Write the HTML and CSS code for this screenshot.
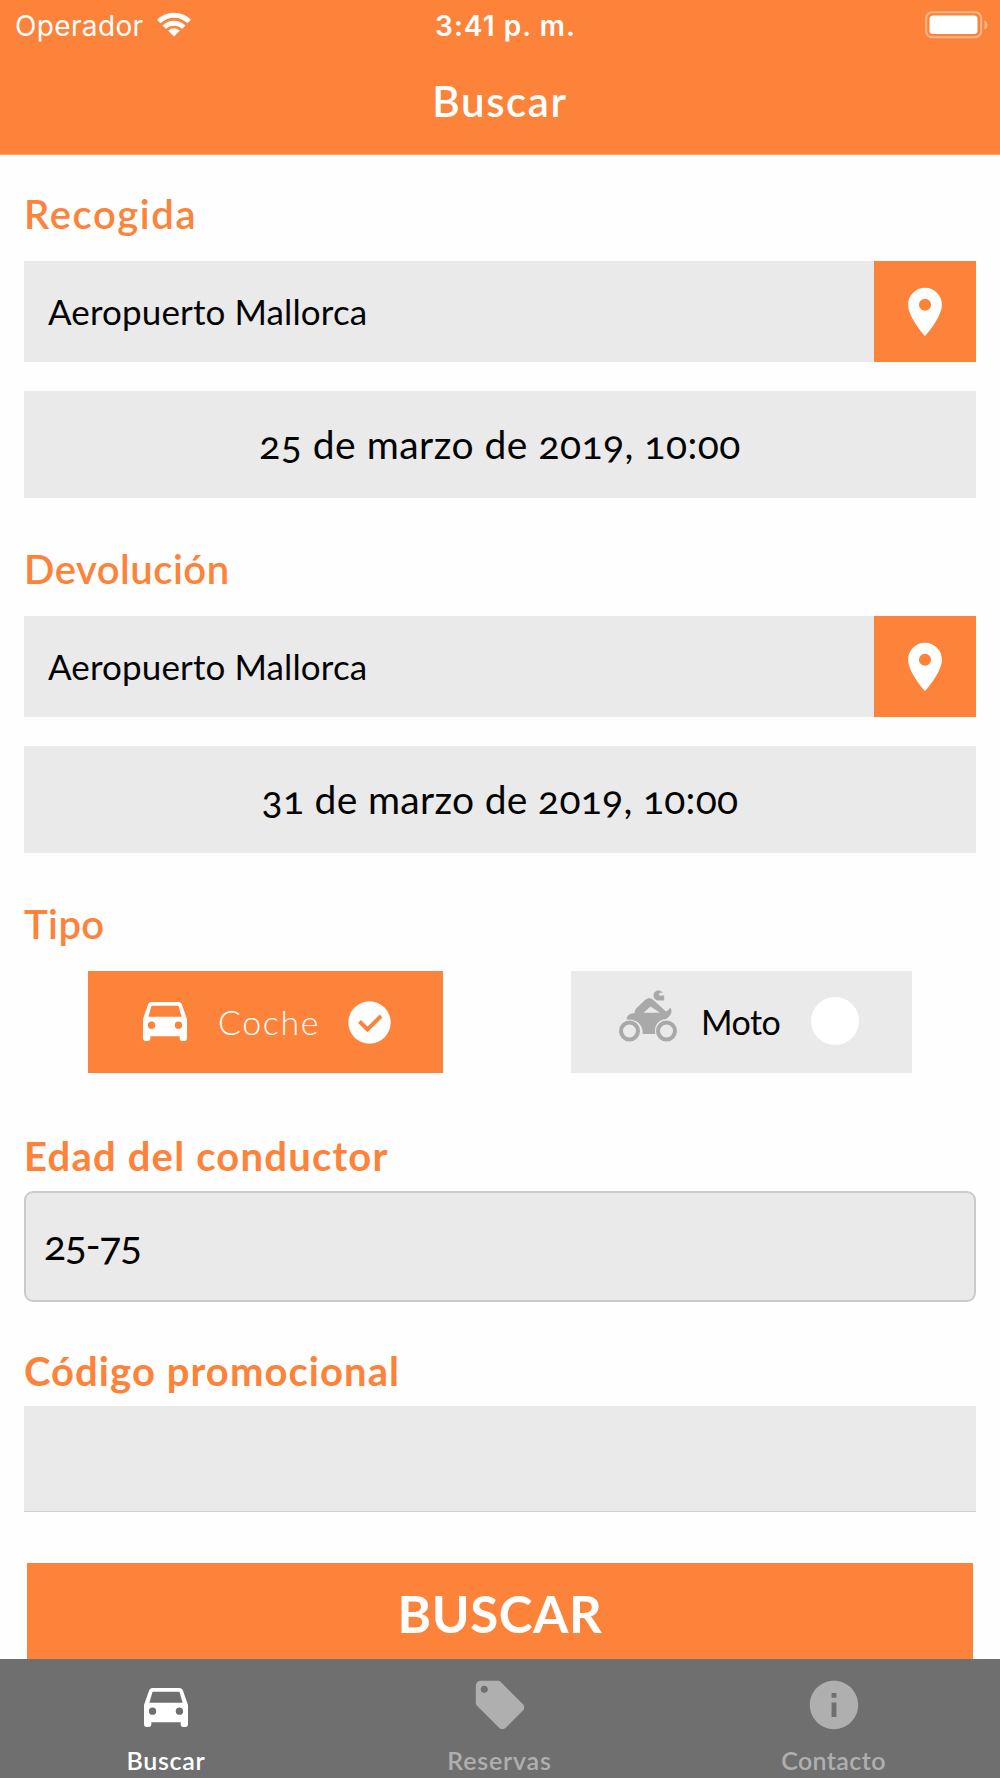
FILE: index.html
```html
<!DOCTYPE html>
<html lang="es">
<head>
<meta charset="utf-8">
<title>Buscar</title>
<link rel="stylesheet" href="styles.css">
</head>
<body>
<header class="header">
  <div class="status">
    <div class="carrier"><span class="carrier-name">Operador</span>
      <svg class="wifi" width="34" height="25" viewBox="0 0 34 25" fill="none" stroke="#fff" stroke-width="5"><path d="M1.8 9.5a21.5 21.5 0 0 1 30.4 0M7.3 15.2a13.7 13.7 0 0 1 19.4 0"/><path d="M11.2 18.7a8.2 8.2 0 0 1 11.6 0L17 24.5z" fill="#fff" stroke="none"/></svg>
    </div>
    <div class="clock"><span class="clock-text">3:41 p. m.</span></div>
    <svg class="battery" width="64" height="28" viewBox="0 0 64 28"><rect x="1.2" y="1.2" width="55" height="25" rx="6" fill="none" stroke="#fff" stroke-opacity=".42" stroke-width="2"/><rect x="4.5" y="4.5" width="48" height="18.500" rx="3.500" fill="#fff"/><path d="M59.500 9.500q3 1.500 3 4.500t-3 4.500z" fill="#fff" fill-opacity=".45"/></svg>
  </div>
  <h1 class="title"><span class="title-text">Buscar</span></h1>
</header>
<main class="form">
  <section class="group">
    <h2 class="label"><span class="t-recogida">Recogida</span></h2>
    <div class="place"><div class="place-name"><span class="t-place">Aeropuerto Mallorca</span></div><div class="pin"><svg width="58" height="58" viewBox="0 0 24 24" fill="#fff"><path d="M12 2C8.130 2 5 5.130 5 9c0 5.250 7 13 7 13s7-7.750 7-13c0-3.870-3.130-7-7-7zm0 9.500a2.500 2.500 0 0 1 0-5 2.500 2.500 0 0 1 0 5z"/></svg></div></div>
    <div class="date"><span class="t-date1">25 de marzo de 2019, 10:00</span></div>
  </section>
  <section class="group">
    <h2 class="label"><span class="t-devolucion">Devolución</span></h2>
    <div class="place"><div class="place-name"><span class="t-place">Aeropuerto Mallorca</span></div><div class="pin"><svg width="58" height="58" viewBox="0 0 24 24" fill="#fff"><path d="M12 2C8.130 2 5 5.130 5 9c0 5.250 7 13 7 13s7-7.750 7-13c0-3.870-3.130-7-7-7zm0 9.500a2.500 2.500 0 0 1 0-5 2.500 2.500 0 0 1 0 5z"/></svg></div></div>
    <div class="date"><span class="t-date2">31 de marzo de 2019, 10:00</span></div>
  </section>
  <section class="types">
    <h2 class="label"><span class="t-tipo">Tipo</span></h2>
    <div class="options">
      <div class="option option-car">
        <svg class="car" width="44" height="39" viewBox="3 5 18 16" preserveAspectRatio="none" fill="#fff"><path fill-rule="evenodd" d="M18.920 6.010C18.720 5.420 18.160 5 17.500 5h-11c-.660 0-1.210.420-1.420 1.010L3 12v8c0 .550.450 1 1 1h1c.550 0 1-.450 1-1v-1h12v1c0 .550.450 1 1 1h1c.550 0 1-.450 1-1v-8zM6.500 16a1.500 1.500 0 0 1 0-3 1.500 1.500 0 0 1 0 3zm11 0a1.500 1.500 0 0 1 0-3 1.500 1.500 0 0 1 0 3zM5.200 11l1.300-4.500h11l1.300 4.500z"/></svg>
        <span class="t-coche">Coche</span>
        <svg class="check" width="43" height="43" viewBox="0 0 43 43"><circle cx="21.500" cy="21.500" r="21.200" fill="#fff"/><path d="M11.500 20.500l8 8L33 15" fill="none" stroke="#fd823a" stroke-width="4"/></svg>
      </div>
      <div class="option option-moto">
        <svg class="moto" width="58" height="52" viewBox="0 0 58 52" fill="#a9a9a9"><g fill="none" stroke="#a9a9a9" stroke-width="4"><circle cx="10.500" cy="41" r="8.500"/><circle cx="47.500" cy="41" r="8.500"/></g><path fill-rule="evenodd" d="M7.500 29.500C8 25.500 10 23.300 15.500 23.300C15.500 20 17 18.600 19 16.700L25.500 10.500C29 7 31.500 7 35 10.500L47 21.500C50.500 20.500 49 18 52 18.300C53 22 52.500 24 50 26.500C48.500 28.500 46.500 29.300 44 29.500C38 31.500 35 37 36.300 44H23.500C24.500 35 18 28.700 7.500 29.500zM24.500 22.800H41L31.500 16.500z"/><path d="M44 2.500C39-2 34.500 1.500 34.500 5.500c0 3 2.500 5 5 5h5.700V5.500h-5V3z"/></svg>
        <span class="t-moto">Moto</span>
        <i class="radio"></i>
      </div>
    </div>
  </section>
  <section class="age">
    <h2 class="label bold"><span class="t-edad">Edad del conductor</span></h2>
    <div class="select"><span class="t-age">25-75</span></div>
  </section>
  <section class="promo">
    <h2 class="label bold"><span class="t-codigo">Código promocional</span></h2>
    <div class="input"></div>
  </section>
  <div class="submit"><span class="t-submit">BUSCAR</span></div>
</main>
<nav class="tabs">
  <div class="tab active"><div class="tab-icon"><svg class="tab-car" width="44" height="39" viewBox="3 5 18 16" preserveAspectRatio="none" fill="#fff"><path fill-rule="evenodd" d="M18.920 6.010C18.720 5.420 18.160 5 17.500 5h-11c-.660 0-1.210.420-1.420 1.010L3 12v8c0 .550.450 1 1 1h1c.550 0 1-.450 1-1v-1h12v1c0 .550.450 1 1 1h1c.550 0 1-.450 1-1v-8zM6.500 16a1.500 1.500 0 0 1 0-3 1.500 1.500 0 0 1 0 3zm11 0a1.500 1.500 0 0 1 0-3 1.500 1.500 0 0 1 0 3zM5.200 11l1.300-4.500h11l1.300 4.500z"/></svg></div><span class="t-tab1">Buscar</span></div>
  <div class="tab"><div class="tab-icon"><svg width="58" height="58" viewBox="0 0 24 24" fill="#afafaf"><path d="M21.410 11.580l-9-9C12.050 2.220 11.550 2 11 2H4c-1.100 0-2 .900-2 2v7c0 .550.220 1.050.590 1.420l9 9c.360.360.860.580 1.410.580.550 0 1.050-.220 1.410-.590l7-7c.370-.360.590-.860.590-1.410 0-.550-.230-1.060-.590-1.420zM5.500 7C4.670 7 4 6.330 4 5.500S4.670 4 5.500 4 7 4.670 7 5.500 6.330 7 5.500 7z"/></svg></div><span class="t-tab2">Reservas</span></div>
  <div class="tab"><div class="tab-icon"><svg width="58" height="58" viewBox="0 0 24 24" fill="#afafaf"><path d="M12 2C6.480 2 2 6.480 2 12s4.480 10 10 10 10-4.480 10-10S17.520 2 12 2zm1 15h-2v-6h2v6zm0-8h-2V7h2v2z"/></svg></div><span class="t-tab3">Contacto</span></div>
</nav>
</body>
</html>
```
FILE: styles.css
```css
* { box-sizing: border-box; }
body { margin: 0; width: 1000px; height: 1778px; overflow: hidden; display: flex; flex-direction: column; background: #fefefe; color: #050505; font-family: Lato, sans-serif; font-variant-numeric: oldstyle-nums; }
span { white-space: nowrap; }
svg { display: block; flex: none; }
h1, h2 { margin: 0; font-weight: 400; }

.header { height: 155px; flex: none; background: #fd823a; color: #fff; border-bottom: 1px solid #fda873; }
.status { height: 50px; display: grid; grid-template-columns: 1fr auto 1fr; align-items: center; padding: 2px 11px 0 15px; font-family: Inter, sans-serif; font-size: 28px; font-variant-numeric: normal; }
.carrier { display: flex; align-items: center; gap: 14px; }
.carrier-name { letter-spacing: .35px; }
.wifi { margin-top: -4px; }
.clock { font-weight: 600; padding-left: 7px; letter-spacing: 1.05px; }
.battery { justify-self: end; margin-top: -3px; }
.title { height: 104px; display: flex; justify-content: center; align-items: center; font-size: 42px; font-weight: 600; letter-spacing: 1.6px; padding-bottom: 2px; }

.form { flex: 1; min-height: 0; padding: 38px 24px 0; overflow: hidden; }
.group { height: 355px; }
.label { height: 68px; padding-top: 0; font-size: 40px; line-height: 42px; font-weight: 600; color: #fd823a; }
.place { height: 101px; display: flex; background: #eaeaea; margin-bottom: 29px; font-size: 35px; }
.place-name { flex: 1; display: flex; align-items: center; padding: 0 0 2px 24px; }
.pin { width: 102px; background: #fd823a; display: flex; align-items: center; justify-content: center; }
.date { height: 107px; background: #eaeaea; display: flex; align-items: center; justify-content: center; font-size: 39px; padding-bottom: 1px; }
.t-recogida { letter-spacing: 1.6px; }
.t-devolucion { letter-spacing: .5px; }
.t-tipo { letter-spacing: .4px; }
.t-place { letter-spacing: .12px; }
.t-date1 { letter-spacing: .48px; }
.t-date2 { letter-spacing: .3px; }

.types { height: 232px; }
.options { display: flex; justify-content: space-between; padding: 0 64px; }
.option { height: 102px; display: flex; align-items: center; font-size: 34px; }
.option-car { width: 355px; background: #fd823a; color: #fff; padding-left: 55px; font-weight: 300; }
.option-moto { width: 341px; background: #eaeaea; padding-left: 48px; }
.option span { margin-top: -2px; }
.car { margin-right: 31px; margin-top: -1px; }
.t-coche { letter-spacing: 1.6px; }
.check { margin-left: 28px; margin-top: 1px; }
.moto { margin-top: -12px; margin-right: 24px; }
.t-moto { letter-spacing: -.5px; }
.radio { width: 48px; height: 48px; border-radius: 50%; background: #fff; margin-left: 31px; margin-top: -2px; }

.bold { font-weight: 700; }
.age { height: 215px; }
.age .label, .promo .label { height: 56px; }
.t-edad { letter-spacing: 1.2px; }
.select { height: 111px; background: #eaeaea; border: 2px solid #c9cbca; border-radius: 9px; padding: 0 0 5px 18px; display: flex; align-items: center; font-size: 41px; }
.t-age { letter-spacing: -1.4px; }
.promo { height: 213px; }
.t-codigo { letter-spacing: 1.05px; }
.input { height: 106px; background: #eaeaea; border-bottom: 1px solid #d0d0d0; }
.submit { height: 102px; margin: 0 3px; background: #fd823a; color: #fff; display: flex; justify-content: center; align-items: center; font-size: 51px; font-weight: 700; letter-spacing: .6px; padding-bottom: 1px; }

.tabs { height: 119px; flex: none; display: grid; grid-template-columns: 332px 335px 333px; background: #6f6f6f; color: #afafaf; font-size: 25px; font-weight: 600; }
.tab { display: flex; flex-direction: column; align-items: center; }
.tab-icon { height: 86px; display: flex; align-items: center; padding-top: 6px; }
.tab-car { margin-top: 4px; }
.t-tab1 { letter-spacing: .7px; }
.t-tab2 { letter-spacing: .8px; }
.t-tab3 { letter-spacing: .4px; }
.active { color: #fff; }
```
